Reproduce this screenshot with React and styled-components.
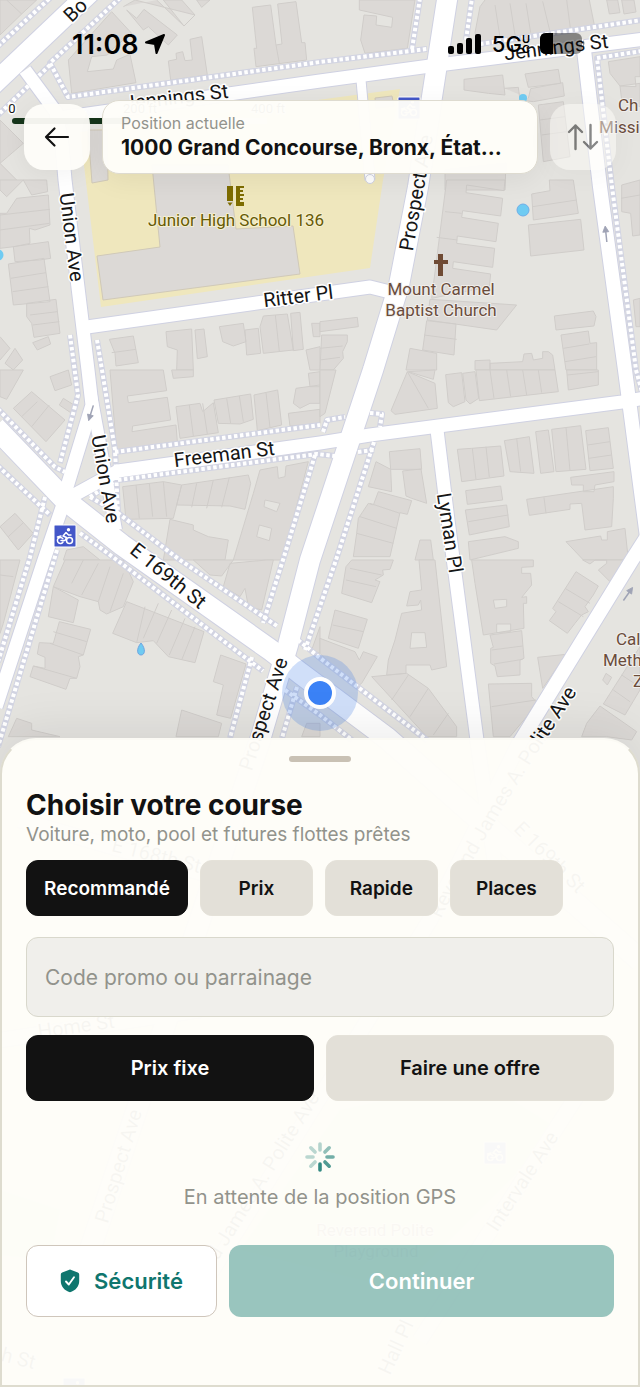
import React from "react";
import styled, { createGlobalStyle } from "styled-components";

const GlobalStyle = createGlobalStyle`
  * {
    box-sizing: border-box;
  }

  body {
    margin: 0;
    background: #e5e4e1;
    color: #121212;
    font-family: Inter, "Noto Sans", sans-serif;
  }

  button, input {
    font-family: inherit;
    margin: 0;
  }
`;

const Screen = styled.main`
  position: relative;
  display: flex;
  flex-direction: column;
  min-height: 100vh;
  overflow: hidden;
`;

const MapCanvas = styled.svg`
  position: absolute;
  top: 0;
  left: 0;
  width: 100%;
  height: 100%;

  text {
    font-family: Roboto, "Noto Sans", sans-serif;
    paint-order: stroke;
    stroke: #fff;
    stroke-width: 3px;
    stroke-linejoin: round;
  }

  .street {
    font-size: 20px;
    fill: #161616;
    text-anchor: middle;
  }

  .curved {
    text-anchor: end;
  }

  .place {
    font-size: 17px;
    fill: #6a4c3c;
    stroke: #f1efec;
    stroke-width: 2px;
  }

  .school {
    fill: #665a05;
    stroke: #f6f0d0;
  }

  .middle {
    text-anchor: middle;
  }

  .scale {
    font-size: 13px;
    fill: #161616;
    text-anchor: middle;
  }
`;

const StatusBar = styled.header`
  position: relative;
  display: flex;
  align-items: center;
  justify-content: space-between;
  height: 100px;
  padding: 0 54px 12px 72px;
  color: #000;
`;

const StatusGroup = styled.div`
  display: flex;
  align-items: center;
  gap: ${props => props.$gap}px;
`;

const Clock = styled.span`
  font-size: 27px;
  font-weight: 600;
`;

const Network = styled.span`
  display: flex;
  align-items: center;
  font-size: 22px;
  font-weight: 500;
`;

const NetworkSuffix = styled.span`
  display: flex;
  flex-direction: column;
  font-size: 11px;
  line-height: 10px;
  font-weight: 600;
`;

const TopBar = styled.nav`
  position: relative;
  display: flex;
  align-items: center;
  gap: 12px;
  padding: 0 24px;
`;

const IconButton = styled.button`
  display: flex;
  align-items: center;
  justify-content: center;
  flex: none;
  width: 66px;
  height: 66px;
  padding: 0;
  border: none;
  border-radius: 20px;
  color: #121212;
  background: rgba(254, 253, 249, 0.95);
  opacity: ${props => (props.disabled ? 0.5 : 1)};
  box-shadow: 0 4px 24px rgba(0, 0, 0, 0.05);
`;

const AddressCard = styled.button`
  flex: 1;
  min-width: 0;
  height: 74px;
  padding: 0 20px 0 18px;
  border: 1px solid #dedbd0;
  border-radius: 17px;
  background: rgba(254, 253, 249, 0.97);
  color: #121212;
  text-align: left;
  box-shadow: 0 6px 28px rgba(0, 0, 0, 0.06);
`;

const AddressLabel = styled.span`
  display: block;
  font-size: 16px;
  line-height: 22px;
  color: #92938c;
`;

const AddressValue = styled.span`
  display: block;
  overflow: hidden;
  font-size: 21px;
  font-weight: 700;
  line-height: 28px;
  text-overflow: ellipsis;
  white-space: nowrap;
`;

const Sheet = styled.section`
  position: relative;
  display: flex;
  flex-direction: column;
  margin-top: auto;
  padding: 16px 24px 68px;
  border: 2px solid #dedccf;
  border-top-color: #fbfaf4;
  border-radius: 36px 36px 0 0;
  background: rgba(254, 253, 249, 0.97);
  box-shadow: 0 -8px 48px rgba(0, 0, 0, 0.08);
`;

const Handle = styled.div`
  align-self: center;
  width: 62px;
  height: 6px;
  border-radius: 3px;
  background: #c9c1b4;
`;

const Title = styled.h1`
  margin: 25px 0 0;
  font-size: 28px;
  font-weight: 700;
  line-height: 36px;
`;

const Subtitle = styled.p`
  margin: 0;
  font-size: 19px;
  line-height: 24px;
  color: #92938c;
`;

const Filters = styled.div`
  display: flex;
  gap: 12px;
  margin-top: 13px;
`;

const Choice = styled.button`
  height: 56px;
  min-width: 113px;
  padding: 0 17px;
  border: 1px solid ${props => (props.$active ? "#121212" : "#e5e2d9")};
  border-radius: 12px;
  background: ${props => (props.$active ? "#121212" : "#e3e0d8")};
  color: ${props => (props.$active ? "#fff" : "#121212")};
  font-size: 19px;
  font-weight: 600;
`;

const ModeChoice = styled(Choice)`
  flex: 1;
  height: 66px;
  font-size: 20px;
`;

const PromoInput = styled.input`
  width: 100%;
  height: 80px;
  margin-top: 21px;
  padding: 0 18px;
  border: 1px solid #d9d8cc;
  border-radius: 12px;
  background: #f0efeb;
  color: #121212;
  font-size: 21px;

  &::placeholder {
    color: #92938c;
    opacity: 1;
  }
`;

const Modes = styled.div`
  display: flex;
  gap: 12px;
  margin-top: 18px;
`;

const Waiting = styled.div`
  display: flex;
  flex-direction: column;
  align-items: center;
  gap: 10px;
  padding: 40px 0 34px;
  color: #92938c;
  font-size: 20px;
  line-height: 28px;
`;

const Actions = styled.div`
  display: flex;
  gap: 12px;
`;

const SafetyButton = styled.button`
  display: flex;
  align-items: center;
  justify-content: center;
  gap: 14px;
  width: 191px;
  height: 72px;
  border: 1px solid #cfc6bb;
  border-radius: 12px;
  background: #fff;
  color: #0f766e;
  font-size: 22px;
  font-weight: 600;
`;

const ContinueButton = styled.button`
  flex: 1;
  height: 72px;
  border: none;
  border-radius: 12px;
  background: rgba(15, 118, 110, 0.42);
  color: #fff;
  font-size: 22px;
  font-weight: 600;
`;

// [path, width]
const roads = [
  ["M-20 97L100 -17", 20],
  ["M25 70L56 112L62 145L65 180L88 370L92 405L66 490", 13],
  ["M91 395L116 530", 12],
  ["M-5 427L65 500L122 545L272 651L300 673L387 738L480 820L640 960", 21],
  ["M449 -10L447 0L418 187L399 285L373 370L310 560L288 645L260 740L180 980L90 1250", 20],
  ["M60 118L320 81L430 66L645 39", 13],
  ["M584 50L600 187L625 370L650 560", 14],
  ["M361 80L370 180", 9],
  ["M80 328L320 294L370 287L390 292", 13],
  ["M65 500L118 471L320 443L370 435L622 402L645 398", 13],
  ["M437 430L448 520L477 740L500 900", 13],
  ["M68 490L44 560L-4 707", 13],
  ["M650 532L632 560L520 742L430 920L200 1290", 14],
  ["M20 820L260 890", 14],
  ["M0 1040L200 1010", 14],
  ["M600 1060L420 1340", 14]
];

const footpaths = [
  "M-2 46L50 -2",
  "M120 -2L50 63L68 97L320 62L427 49",
  "M50 65L-2 115",
  "M412 49L420 -2",
  "M466 40L472 -2",
  "M480 44L642 20",
  "M642 51L597 58L612 187L636 370",
  "M70 335L78 395L60 463",
  "M97 340L102 370L115 450L118 513L180 560L277 626",
  "M115 452L320 425",
  "M323 432L327 420L345 417",
  "M370 413L382 414L380 427",
  "M118 480L317 454L335 456",
  "M358 452L374 450",
  "M374 442L336 560L305 650",
  "M315 455L283 560L263 623",
  "M-2 409L55 467L65 472",
  "M-2 466L50 515",
  "M45 497L30 557L-2 662",
  "M57 550L-2 747",
  "M80 533L117 560L263 671",
  "M252 657L230 738",
  "M90 497L115 481",
  "M90 497L118 513",
  "M297 687L282 738",
  "M298 640L320 658L427 740",
  "M285 690L320 715L352 740",
  "M636 370L642 392"
];

// Building footprints by 320x190 block: [x, y, path in thirds of a pixel]
const blocks = [
  [0, 0, "M0 0H110L65 42L0 105Z M20 0L65 42 M205 180L335 35L395 100L345 140L322 165L275 170L262 215L340 207L350 180L390 163L408 248L215 280Z M370 20L405 0L585 45L552 78L470 0 M380 30L410 55L432 28L532 105L505 135L445 80L430 90Z M490 0L552 78L585 45L545 0Z M605 22L630 0H590Z M505 183L530 178L528 160L548 155L555 182L577 180L570 118L605 110L622 225L512 240Z M757 22L812 15L828 135L846 132L833 12L888 5L905 128L915 128L920 180L768 200L762 145L770 145Z M828 135L838 190 M0 360L70 430L0 490Z M0 490L50 540L0 570"],
  [320, 0, "M118 0H285L262 145L135 160L122 120L132 45L170 48L168 75L215 82L218 52L118 30Z M495 0L480 20L465 98L475 125L825 85L808 0 M525 15L540 112 M570 10L585 105 M618 10L632 98 M668 4L690 95 M740 0L752 92 M860 0L868 42L900 38L893 0Z M905 0L912 42L948 36L942 0Z M432 238L548 225L555 285L505 280L432 270Z M553 265L595 262L600 300L640 305L733 288L728 248L632 266L625 295 M615 222L715 208L722 250L625 262Z M655 315L730 305L750 470L670 485Z M660 360L735 350 M665 405L740 395 M865 185L960 170V230L945 230L948 260L900 258L870 220Z M900 258L960 250V320L905 300Z M375 510L558 490L555 570H375Z"],
  [0, 180, "M0 0H140L143 35L95 45L70 0L20 50L0 30Z M20 100L50 55L145 45L150 135L105 150L88 145L90 190L42 200L0 205V100Z M0 105L150 88 M0 150L148 130 M40 200L145 185L152 235L118 240L45 245Z M25 252L132 235L150 365L40 375Z M32 295L138 278 M38 335L145 320 M80 370L168 358L180 460L102 472L95 430L80 410Z M90 405L172 395 M98 435L178 425 M98 488L145 470L152 492L112 510Z M0 470L30 505L0 540 M15 550L45 505L68 540L40 570Z M328 478L400 468L415 548L348 558L345 520Z M335 518L408 508 M498 455L575 447L580 570H530L532 510L502 500Z M585 450L612 447L622 530L592 536Z M658 440L730 430L738 485L700 498L668 485Z M735 450L775 445L782 520L740 525Z M780 440L790 408L862 402L880 510L790 520Z M826 405L838 515 M872 400L900 397L910 508L880 512Z M935 430H960V470H940Z M918 510L960 500V570H930Z"],
  [320, 180, "M380 0H555L552 32L440 15L438 38L548 55L542 108L428 92L425 112L535 130L528 185L412 168L410 190L524 205L518 262L400 245L398 265L512 282L508 320L335 355Z M375 95L425 100 M350 172L412 180 M330 358L590 375L530 450L322 420Z M320 422L408 432L402 525L308 510Z M312 465L410 478 M270 505L350 520V570H258Z M635 42L690 32L688 0H760L775 100L640 120Z M638 80L770 60 M625 135L782 118L792 210L632 228Z M905 15L960 0V165L938 168L932 100L905 95Z M903 55L960 45 M940 360L960 355V440H948Z M703 408L820 393L828 410L822 438L708 450Z M723 465L805 453L810 490L830 488V570H738Z M730 505L808 492 M735 545L828 530 M465 542L510 540V570H465Z M510 570V550L608 545L612 522L635 520L640 540L668 535V515H685L698 525L705 570Z M0 425L112 412L115 440L0 455Z M5 465L82 465V485L68 515L70 535L40 570H0Z M0 505L68 498 M0 540L60 532"],
  [0, 370, "M0 0H70L20 88L0 80Z M150 20L205 0L215 45L165 62Z M40 115L95 65L195 150L138 215Z M65 140L112 95 M95 170L148 105 M178 105L190 85L222 105L212 128Z M330 0H490L500 62L382 78L385 98L502 82L512 150L398 168L396 185L528 165L532 215L350 240Z M515 0H580V20L520 25Z M528 110L600 100L608 125L640 98L655 188L540 205Z M568 105L580 198 M608 100L622 192 M642 90L752 72L760 148L720 162L655 160Z M680 85L692 160 M718 78L730 155 M762 75L833 60L845 165L772 182Z M798 68L810 172 M925 10L960 5V50H930Z M888 55L960 45V100H930L900 115L880 100Z M865 130L960 118V160L870 168Z M368 350L490 335L545 345L530 405L520 445L378 448Z M408 345L418 445 M448 340L458 440 M490 335L500 440 M545 345L745 315L752 340L735 418L690 408L530 405Z M590 340L575 412 M640 330L620 415 M688 322L665 412 M780 300L832 290L835 325L855 320L858 288L925 275L880 445L855 570H700L760 370Z M795 390L840 400L830 425L792 410Z M778 465L815 475L808 512L770 500Z M510 448L580 465V480L625 500L685 510L675 570H490Z M0 470L45 430L100 490L55 540Z M25 500L70 458 M200 540L250 530L300 570H190Z"],
  [320, 370, "M0 0H48L15 130L0 140Z M262 5L345 40L352 115L225 133L213 122Z M265 5L345 0L340 28Z M262 5L325 115 M377 14L425 8L435 95L400 110L385 98Z M428 10L465 5L476 85L450 102L438 90Z M468 0H705L715 65L478 92Z M510 0L522 85 M560 0L572 80 M608 0L620 75 M655 0L665 68 M740 0H835V45L745 60Z M742 15L835 5 M412 238L455 235L542 228L552 318L425 335Z M457 235L468 328 M498 230L508 322 M553 212L628 200L642 310L570 305Z M590 205L602 305 M647 185L685 180L702 305L662 310Z M695 178L782 167L798 298L708 305Z M738 172L750 302 M797 182L865 173L880 295L810 302Z M803 225L870 215 M806 265L875 255 M208 245L300 236L305 298L212 298Z M168 275L212 298L215 365L145 350Z M248 303L303 297L320 400L275 385L258 378Z M175 365L275 392L262 433L240 428L210 560H100L110 490L115 445L145 400L160 405Z M150 400L240 430 M120 440L230 475 M110 490L220 520 M437 362L542 348L548 390L442 403Z M436 420L560 405L568 470L448 495Z M445 455L565 435 M445 515L555 500L595 515V535L450 570Z M620 388L880 350V385L875 470L795 480L785 400L750 402V418L628 436Z M752 322L882 305V335L825 345L822 365H790V345H755Z M672 382L678 430 M738 515L842 498L845 510H862V485L915 475L925 570H790Z M300 510H332L340 570H285Z"],
  [0, 560, "M0 0H60L10 190L0 220Z M0 45L40 50 M195 0H370L400 65L370 140L320 162L300 150L295 125L240 110L160 80Z M160 80L235 120L220 188L145 170Z M250 0L215 70 M295 10L245 105 M330 20L295 125 M370 40L330 155 M178 185L272 208L250 285L235 290L240 320L230 355L210 355L198 388L90 350L100 318L135 325V292L112 282L118 248L160 250Z M150 250L250 285 M100 318L230 355 M160 215L260 245 M380 125L612 215L585 308L505 290L460 242L410 248L338 220Z M435 140L410 248 M475 130L430 235 M515 150L470 250 M555 175L508 285 M585 200L545 300 M662 285L738 312L692 475L650 465L670 375L640 365Z M545 450L665 490L655 530H528Z M50 475L95 490V510L180 530H25Z M580 0H700L665 48L630 45Z M690 10L800 0H820L785 150L745 140L735 85L720 110L670 80Z M960 200L935 270L960 280Z M920 490H960V530H905Z"],
  [320, 560, "M95 0H220L210 28L188 30L190 45L165 60L180 65L155 128L65 100L78 20Z M90 25L185 45 M78 60L168 80 M45 150L142 178L115 265L25 235Z M38 195L130 215 M0 235L105 275L118 300L130 275L172 290L125 370L110 380L20 300L0 280Z M297 0H345L380 320L335 330L330 315H258V340L200 345L205 300L225 240L245 160L305 150L302 120L295 135L260 138L270 95L305 90Z M275 218H315L320 262L270 265Z M155 350L260 340L325 385L410 500V530H320Z M265 345L215 420 M325 385L270 470 M385 460L340 525 M455 0H640V20L605 22V40H632L635 75L605 112L620 110V130H610L612 205L490 225L465 70Z M520 120L560 118V140L525 145Z M530 192H572V215L530 218Z M510 225L605 212L612 295L600 300V345L532 350L525 318L512 310V265L520 262Z M515 270L608 258 M522 312L608 298 M768 35L835 78L820 105L795 140L805 155L785 165L765 190L742 220L688 182L708 155L698 145Z M735 85L810 130 M715 125L790 170 M653 292L738 283L668 385Z M505 372L635 370V410L648 425L620 470L570 530H520Z M515 440L648 420 M848 360L858 340L875 352L862 375Z M840 438L950 515L935 540L860 530H785L800 490Z M960 260L850 432L915 465L960 390Z M905 345L950 375 M880 390L930 425 M788 0H860V10L835 30L870 65L930 0H825L810 12Z"]
];

const streets = [
  ["Bo", 80, 15, -44],
  ["Jennings St", 177, 104, -7],
  ["Jennings St", 557, 54, -7],
  ["Union Ave", 65, 238, 83],
  ["Union Ave", 99, 480, 80],
  ["Prospect Ave", 423, 194, -80],
  ["Ritter Pl", 299, 303, -7],
  ["Freeman St", 225, 461, -7],
  ["E 169th St", 164, 581, 39],
  ["Lyman Pl", 443, 534, 81],
  ["Prospect Ave", 270, 716, -72],
  ["E 168th St", 155, 862, 14],
  ["E 169th St", 545, 862, 45],
  ["Home St", 77, 1033, -8],
  ["Prospect Ave", 125, 1168, -73],
  ["nd James A. Polite Ave", 266, 1184, -58],
  ["Intervale Ave", 528, 1185, -57],
  ["Hall Pl", 402, 1350, -65],
  ["h St", 17, 1365, 14]
];

const BikeSign = ({ x, y }) => (
  <g transform={`translate(${x} ${y})`}>
    <rect width="22" height="22" rx="1" fill="#4356c8" stroke="#fff" strokeWidth="1" />
    <g fill="none" stroke="#fff" strokeWidth="1.5" strokeLinecap="round" strokeLinejoin="round">
      <path d="M8.8 13.6A3 3 0 1 0 9 17M3.5 12L7 11" />
      <circle cx="15.5" cy="15.5" r="3" />
      <path d="M7 15.5H11L12.5 12.5L9 11L12 7.5L14.5 10H17" />
    </g>
    <circle cx="14.5" cy="4.8" r="1.7" fill="#fff" />
  </g>
);

const DirectionArrow = ({ x, y, angle }) => (
  <g transform={`translate(${x} ${y}) rotate(${angle})`} stroke="#9fa3b5" strokeWidth="1.5" fill="#9fa3b5">
    <path d="M0 8V-4" />
    <path d="M-3 -2L0 -8L3 -2Z" strokeWidth="0.8" />
  </g>
);

const StreetMap = () => (
  <MapCanvas viewBox="0 0 640 1387" preserveAspectRatio="xMidYMin slice" role="img" aria-label="Carte">
    <rect width="640" height="1387" fill="#e5e4e0" />
    <path d="M80 132L400 89L383 180L370 268L101 307Z" fill="#efe7bd" />
    <path
      d="M152 165L160 247L97 256L103 300L300 274L293 226L236 229L228 165ZM88 130L92 183L108 180L107 130ZM375 98L392 96L394 106L376 108Z"
      fill="#dcd9d6"
      stroke="#d0c9b8"
    />
    <path d="M480 1080L560 1130L400 1290L240 1250L340 1110Z M0 1190L60 1210L50 1260L0 1255Z" fill="#cfe8c4" />
    {blocks.map(([x, y, d]) => (
      <path
        key={`${x}-${y}`}
        d={d}
        transform={`translate(${x} ${y}) scale(0.33333)`}
        fill="#dcd9d6"
        fillRule="evenodd"
        stroke="#d0cdca"
        strokeWidth="3"
      />
    ))}
    <g fill="none" strokeLinejoin="round">
      {roads.map(([d, width]) => <path key={d} d={d} stroke="#cfd1e2" strokeWidth={width + 2} />)}
      {footpaths.map(d => <path key={d} d={d} stroke="#d2d4e2" strokeWidth="6" />)}
      {footpaths.map(d => <path key={d} d={d} stroke="#fff" strokeWidth="4" strokeDasharray="3.5 2.5" />)}
      {roads.map(([d, width]) => <path key={d} d={d} stroke="#fff" strokeWidth={width} />)}
    </g>
    <circle cx="370" cy="179" r="4.5" fill="#fff" stroke="#cfd1e2" />
    <g fill="#6fcbf2">
      <circle cx="523" cy="210" r="6" stroke="#6eaee8" />
      <circle cx="-2" cy="255" r="5.5" />
      <circle cx="523" cy="98" r="4" />
      <path d="M141 643C146 649 145 655 141 655C137 655 136 649 141 643Z" stroke="#6ea4e0" />
    </g>
    <DirectionArrow x={606} y={234} angle={-6} />
    <DirectionArrow x={91} y={413} angle={197} />
    <DirectionArrow x={628} y={594} angle={35} />
    {streets.map(([name, x, y, angle]) => (
      <text key={`${name}-${x}`} className="street" transform={`translate(${x} ${y}) rotate(${angle})`}>{name}</text>
    ))}
    <path id="polite" d="M420 965L446 908Q500 810 541 747L577 692" fill="none" />
    <text className="street curved">
      <textPath href="#polite" startOffset="100%">Reverend James A. Polite Ave</textPath>
    </text>
    <g fill="#7d6c00">
      <path d="M227 186H233V201H227ZM227.5 202.5H232.5L230 206Z" />
      <path d="M236 186H244V188H240V190H243V192H240V194H244V196H240V198H243V200H240V202H244V206H236Z" />
    </g>
    <text className="place school middle" x="236" y="226">Junior High School 136</text>
    <path d="M438 254H443V260H448V264H443V276H438V264H434V260H438Z" fill="#6f4a34" />
    <text className="place middle" x="441" y="295">Mount Carmel</text>
    <text className="place middle" x="441" y="316">Baptist Church</text>
    <text className="place" x="618" y="111">Ch</text>
    <text className="place" x="599" y="133">Missi</text>
    <text className="place" x="616" y="645">Cal</text>
    <text className="place" x="603" y="666">Meth</text>
    <text className="place" x="633" y="687">Z</text>
    <text className="place middle" x="375" y="1236">Reverend Polite</text>
    <text className="place middle" x="376" y="1257">Playground</text>
    <BikeSign x={54} y={525} />
    <BikeSign x={398} y={97} />
    <BikeSign x={484} y={1142} />
    <BikeSign x={63} y={1378} />
    <path d="M15 121H128" stroke="#16351b" strokeWidth="6" strokeLinecap="round" />
    <path d="M128 121H267" stroke="#f4f6f2" strokeWidth="6" />
    <text className="scale" x="12" y="113">0</text>
    <text className="scale" x="140" y="113">200 ft</text>
    <text className="scale" x="268" y="113">400 ft</text>
    <circle cx="320" cy="693" r="38" fill="#3b78e7" opacity="0.24" />
    <circle cx="320" cy="693" r="14" fill="#3b82f6" stroke="#fff" strokeWidth="4" />
  </MapCanvas>
);

const LocationArrow = () => (
  <svg width="22" height="22" viewBox="0 0 22 22">
    <path d="M20 2L12.5 20L11 11L2 9.5Z" fill="#000" stroke="#000" strokeWidth="2" strokeLinejoin="round" />
  </svg>
);

const Signal = () => (
  <svg width="34" height="22" viewBox="0 0 34 22">
    <rect x="0" y="13" width="6" height="8" rx="2" />
    <rect x="9" y="10" width="6" height="11" rx="2" />
    <rect x="18" y="5" width="6" height="16" rx="2" />
    <rect x="27" y="1" width="6" height="20" rx="2" />
  </svg>
);

const Battery = () => (
  <svg width="46" height="22" viewBox="0 0 46 22">
    <rect x="0" y="0" width="42" height="21" rx="6" opacity="0.42" />
    <path d="M6 0H13V21H6Q0 21 0 15V6Q0 0 6 0Z" />
    <path d="M43 7Q46 10 43 14Z" opacity="0.42" />
  </svg>
);

const BackIcon = () => (
  <svg width="28" height="28" viewBox="0 0 28 28" fill="none" stroke="currentColor" strokeWidth="2.2" strokeLinecap="round" strokeLinejoin="round">
    <path d="M25 14H3M11.5 5.5L3 14L11.5 22.5" />
  </svg>
);

const SwapIcon = () => (
  <svg width="32" height="28" viewBox="0 0 32 28" fill="none" stroke="currentColor" strokeWidth="2.4" strokeLinecap="round" strokeLinejoin="round">
    <path d="M8.5 26V2.5M2 9L8.5 2.5L15 9M23.5 2V25.5M17 19L23.5 25.5L30 19" />
  </svg>
);

const ShieldIcon = () => (
  <svg width="20" height="24" viewBox="0 0 20 24">
    <path d="M10 0.5L17.8 3.5Q19.2 4 19.2 5.5V12C19.2 17.5 15.5 21.5 10 23.3C4.500 21.5 0.800 17.5 0.800 12V5.500Q0.800 4 2.200 3.500Z" fill="currentColor" />
    <path d="M6 12.500L8.800 15.500L14 8.300" fill="none" stroke="#fff" strokeWidth="1.900" strokeLinecap="round" strokeLinejoin="round" />
  </svg>
);

const spokes = [0.3, 0.45, 0.58, 0.72, 0.85, 0.28, 0.28, 0.28];

const Spinner = () => (
  <svg width="32" height="32" viewBox="-16 -16 32 32" stroke="#0f766e" strokeWidth="3.6" strokeLinecap="round">
    {spokes.map((opacity, i) => (
      <path key={i} d="M0 -7V-13" opacity={opacity} transform={`rotate(${i * 45})`} />
    ))}
  </svg>
);

class App extends React.Component {
  state = {
    sort: "Recommandé",
    mode: "Prix fixe"
  };

  render() {
    const { sort, mode } = this.state;

    return (
      <Screen>
        <GlobalStyle />
        <StreetMap />
        <StatusBar>
          <StatusGroup $gap={5}>
            <Clock>11:08</Clock>
            <LocationArrow />
          </StatusGroup>
          <StatusGroup $gap={10}>
            <Signal />
            <Network>
              5G
              <NetworkSuffix>
                <span>U</span>
                <span>C</span>
              </NetworkSuffix>
            </Network>
            <Battery />
          </StatusGroup>
        </StatusBar>
        <TopBar>
          <IconButton aria-label="Retour">
            <BackIcon />
          </IconButton>
          <AddressCard>
            <AddressLabel>Position actuelle</AddressLabel>
            <AddressValue>1000 Grand Concourse, Bronx, État...</AddressValue>
          </AddressCard>
          <IconButton aria-label="Inverser" disabled>
            <SwapIcon />
          </IconButton>
        </TopBar>
        <Sheet>
          <Handle />
          <Title>Choisir votre course</Title>
          <Subtitle>Voiture, moto, pool et futures flottes prêtes</Subtitle>
          <Filters>
            {["Recommandé", "Prix", "Rapide", "Places"].map(name => (
              <Choice key={name} $active={sort === name} aria-pressed={sort === name} onClick={() => this.setState({ sort: name })}>
                {name}
              </Choice>
            ))}
          </Filters>
          <PromoInput type="text" aria-label="Code promo ou parrainage" placeholder="Code promo ou parrainage" />
          <Modes>
            {["Prix fixe", "Faire une offre"].map(name => (
              <ModeChoice key={name} $active={mode === name} aria-pressed={mode === name} onClick={() => this.setState({ mode: name })}>
                {name}
              </ModeChoice>
            ))}
          </Modes>
          <Waiting role="status">
            <Spinner />
            <span>En attente de la position GPS</span>
          </Waiting>
          <Actions>
            <SafetyButton>
              <ShieldIcon />
              Sécurité
            </SafetyButton>
            <ContinueButton>Continuer</ContinueButton>
          </Actions>
        </Sheet>
      </Screen>
    );
  }
}

export default App;
